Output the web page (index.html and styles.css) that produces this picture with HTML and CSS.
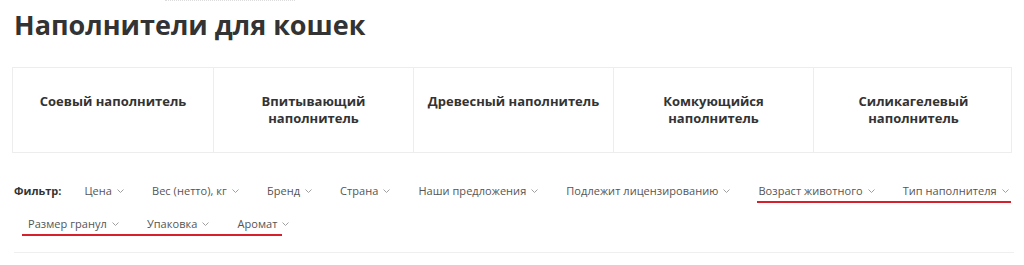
FILE: index.html
```html
<!DOCTYPE html>
<html lang="ru">
<head>
    <meta charset="UTF-8">
    <meta name="viewport" content="width=device-width, initial-scale=1.0">
    <title>Наполнители для кошек</title>
    <link rel="stylesheet" href="styles.css">
</head>
<body>

<div class="page">
    <!-- breadcrumbs remnant -->
    <div class="crumbs"></div>

    <h1 class="title">Наполнители для кошек</h1>

    <!-- Categories -->
    <div class="categories">
        <a class="category" href="#">Соевый наполнитель</a>
        <a class="category" href="#">Впитывающий наполнитель</a>
        <a class="category" href="#">Древесный наполнитель</a>
        <a class="category" href="#">Комкующийся наполнитель</a>
        <a class="category" href="#">Силикагелевый наполнитель</a>
    </div>

    <!-- Filters -->
    <div class="filters">
        <span class="filters-label">Фильтр:</span>
        <span class="filter-item">Цена <svg class="chevron" viewBox="0 0 7 4"><polyline points="0.5,0.5 3.5,3.5 6.5,0.5"/></svg></span>
        <span class="filter-item">Вес (нетто), кг <svg class="chevron" viewBox="0 0 7 4"><polyline points="0.5,0.5 3.5,3.5 6.5,0.5"/></svg></span>
        <span class="filter-item">Бренд <svg class="chevron" viewBox="0 0 7 4"><polyline points="0.5,0.5 3.5,3.5 6.5,0.5"/></svg></span>
        <span class="filter-item">Страна <svg class="chevron" viewBox="0 0 7 4"><polyline points="0.5,0.5 3.5,3.5 6.5,0.5"/></svg></span>
        <span class="filter-item">Наши предложения <svg class="chevron" viewBox="0 0 7 4"><polyline points="0.5,0.5 3.5,3.5 6.5,0.5"/></svg></span>
        <span class="filter-item">Подлежит лицензированию <svg class="chevron" viewBox="0 0 7 4"><polyline points="0.5,0.5 3.5,3.5 6.5,0.5"/></svg></span>
        <span class="filter-group marked first-group">
            <span class="filter-item">Возраст животного <svg class="chevron" viewBox="0 0 7 4"><polyline points="0.5,0.5 3.5,3.5 6.5,0.5"/></svg></span>
            <span class="filter-item">Тип наполнителя <svg class="chevron" viewBox="0 0 7 4"><polyline points="0.5,0.5 3.5,3.5 6.5,0.5"/></svg></span>
        </span>
        <span class="filter-group marked second-group">
            <span class="filter-item">Размер гранул <svg class="chevron" viewBox="0 0 7 4"><polyline points="0.5,0.5 3.5,3.5 6.5,0.5"/></svg></span>
            <span class="filter-item">Упаковка <svg class="chevron" viewBox="0 0 7 4"><polyline points="0.5,0.5 3.5,3.5 6.5,0.5"/></svg></span>
            <span class="filter-item">Аромат <svg class="chevron" viewBox="0 0 7 4"><polyline points="0.5,0.5 3.5,3.5 6.5,0.5"/></svg></span>
        </span>
    </div>

    <div class="divider"></div>
</div>

</body>
</html>
```

FILE: styles.css
```css
body {
    margin: 0;
    font-family: 'Open Sans', 'Liberation Sans', sans-serif;
    background-color: #ffffff;
    color: #333333;
    overflow: hidden;
}

.page {
    padding: 0 0 0 14px;
}

.crumbs {
    width: 130px;
    height: 0;
    margin-left: 151px;
    border-top: 1px dotted #dcdcdc;
}

.title {
    margin: 7px 0 26px;
    font-size: 27px;
    font-weight: 700;
    line-height: 33px;
    color: #333333;
}

.categories {
    display: grid;
    grid-template-columns: repeat(5, 200px);
    margin-left: -2px;
    border: 1px solid #ededed;
    width: 1000px;
    box-sizing: border-box;
}

.category {
    height: 84px;
    padding: 25px 8px 0;
    box-sizing: border-box;
    border-left: 1px solid #ededed;
    font-size: 13px;
    font-weight: 700;
    line-height: 17px;
    text-align: center;
    color: #333333;
    text-decoration: none;
}

.category:first-child {
    border-left: none;
}

.filters {
    display: flex;
    flex-wrap: wrap;
    align-items: center;
    margin: 21px -30px 0 0;
    font-size: 11px;
    color: #555555;
}

.filters-label {
    font-weight: 700;
    color: #333333;
    margin-right: 9px;
    line-height: 33px;
}

.filter-item {
    display: flex;
    align-items: center;
    height: 33px;
    padding: 0 14px;
    letter-spacing: 0.05px;
    white-space: nowrap;
}

.chevron {
    width: 7px;
    height: 4px;
    margin-left: 5px;
    margin-top: 1px;
    fill: none;
    stroke: #a0a0a0;
    stroke-width: 1;
}

.filter-group {
    display: flex;
    position: relative;
}

.marked::after {
    content: "";
    position: absolute;
    bottom: 4px;
    height: 2px;
    background-color: #d6202c;
}

.first-group::after {
    left: 13px;
    right: 12px;
}

.second-group::after {
    left: 8px;
    right: 21px;
}

.divider {
    margin: 12px 10px 0 0;
    border-top: 1px solid #efefef;
}
```
